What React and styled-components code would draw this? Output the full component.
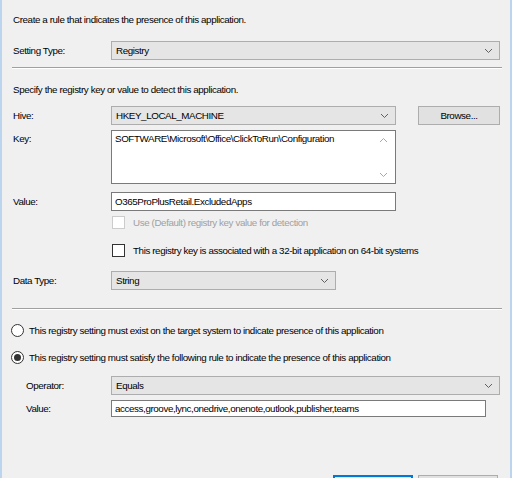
import React from "react";
import styled, { createGlobalStyle } from "styled-components";

const Global = createGlobalStyle`
  html, body { margin: 0; padding: 0; background: #f0f0f0; }
  * { box-sizing: border-box; }
`;

const Page = styled.div`
  width: 512px;
  height: 478px;
  overflow: hidden;
  background: #f0f0f0;
  border-left: 2px solid #bcd5ee;
  border-right: 2px solid #bcd5ee;
  padding: 13px 10px 0 11px;
  display: flex;
  flex-direction: column;
  font-family: "Liberation Sans", Arial, sans-serif;
  font-size: 9.8px;
  letter-spacing: -0.4px;
  color: #000;
`;

const Text = styled.div`
  height: 14px;
  line-height: 14px;
  margin-top: ${(p) => p.$mt || 0}px;
  white-space: nowrap;
`;

const Separator = styled.div`
  height: 1px;
  background: #a0a0a0;
  margin-top: ${(p) => p.$mt || 0}px;
  width: 490px;
  margin-left: -1px;
  box-shadow: 0 1px 0 #fff;
`;

const Row = styled.div`
  display: flex;
  align-items: ${(p) => (p.$top ? "flex-start" : "center")};
  margin-top: ${(p) => p.$mt || 0}px;
`;

const Label = styled.div`
  width: 98px;
  flex: none;
  padding-left: ${(p) => p.$indent || 0}px;
  padding-top: ${(p) => (p.$top ? 3 : 0)}px;
  white-space: nowrap;
`;

const Combo = styled.div`
  width: ${(p) => p.$w}px;
  height: 19px;
  border: 1px solid #adadad;
  background: #e5e5e5;
  display: flex;
  align-items: center;
  padding-left: 4px;
  white-space: nowrap;
`;

const ComboText = styled.span`
  flex: 1;
`;

const Chevron = styled.svg`
  width: 9px;
  height: 6px;
  margin-right: 6px;
  flex: none;
`;

const ChevronIcon = ({ up, light }) => (
  <Chevron viewBox="0 0 9 6">
    <path
      d={up ? "M1 5 L4.5 1.5 L8 5" : "M1 1 L4.5 4.5 L8 1"}
      fill="none"
      stroke={light ? "#a8a8a8" : "#606060"}
      strokeWidth="1"
    />
  </Chevron>
);

const Input = styled.div`
  width: ${(p) => p.$w}px;
  height: ${(p) => p.$h || 19}px;
  border: 1px solid #7a7a7a;
  background: #fff;
  display: flex;
  align-items: center;
  padding-left: 3px;
  white-space: nowrap;
  overflow: hidden;
`;

const TextArea = styled.div`
  width: 285px;
  height: 54px;
  border: 1px solid #7a7a7a;
  background: #fff;
  display: flex;
`;

const TextAreaContent = styled.div`
  flex: 1;
  padding: 2px 3px;
  white-space: nowrap;
`;

const ScrollBar = styled.div`
  width: 17px;
  display: flex;
  flex-direction: column;
  justify-content: space-between;
  align-items: center;
  padding: 6px 0 5px;
`;

const Button = styled.div`
  width: 82px;
  height: 19px;
  border: 1px solid #adadad;
  background: #e1e1e1;
  display: flex;
  align-items: center;
  justify-content: center;
  margin-left: ${(p) => p.$ml || 0}px;
`;

const CheckRow = styled.div`
  display: flex;
  align-items: center;
  margin-top: ${(p) => p.$mt || 0}px;
  margin-left: ${(p) => p.$indent || 0}px;
  color: ${(p) => (p.$disabled ? "#a0a0a0" : "#000")};
  height: 13px;
  white-space: nowrap;
`;

const Box = styled.span`
  width: 13px;
  height: 13px;
  border: 1px solid ${(p) => (p.$disabled ? "#cccccc" : "#333333")};
  background: #fff;
  margin-right: 8px;
  flex: none;
`;

const Radio = styled.span`
  width: 13px;
  height: 13px;
  border-radius: 50%;
  border: 1px solid #333;
  background: #fff;
  margin-right: 5px;
  flex: none;
  display: flex;
  align-items: center;
  justify-content: center;
  &::after {
    content: "";
    width: 7px;
    height: 7px;
    border-radius: 50%;
    background: ${(p) => (p.$checked ? "#333" : "transparent")};
  }
`;

const Footer = styled.div`
  margin-top: auto;
  display: flex;
  justify-content: flex-end;
  padding-right: 2px;
  height: 3px;
  align-items: flex-start;
`;

const FooterButton = styled.div`
  width: 80px;
  height: 23px;
  flex: none;
  border: 1px solid ${(p) => (p.$primary ? "#0078d7" : "#adadad")};
  box-shadow: ${(p) => (p.$primary ? "inset 0 0 0 1px #0078d7" : "none")};
  background: #e1e1e1;
  margin-left: ${(p) => p.$ml || 0}px;
`;

export default function App() {
  return (
    <>
      <Global />
      <Page>
        <Text>Create a rule that indicates the presence of this application.</Text>
        <Row $mt={14}>
          <Label>Setting Type:</Label>
          <Combo $w={389}>
            <ComboText>Registry</ComboText>
            <ChevronIcon />
          </Combo>
        </Row>
        <Separator $mt={7} />
        <Text $mt={15}>Specify the registry key or value to detect this application.</Text>
        <Row $mt={9}>
          <Label>Hive:</Label>
          <Combo $w={285}>
            <ComboText>HKEY_LOCAL_MACHINE</ComboText>
            <ChevronIcon />
          </Combo>
          <Button $ml={22}>Browse...</Button>
        </Row>
        <Row $mt={5} $top>
          <Label $top>Key:</Label>
          <TextArea>
            <TextAreaContent>SOFTWARE\Microsoft\Office\ClickToRun\Configuration</TextAreaContent>
            <ScrollBar>
              <ChevronIcon up light />
              <ChevronIcon light />
            </ScrollBar>
          </TextArea>
        </Row>
        <Row $mt={8}>
          <Label>Value:</Label>
          <Input $w={285}>O365ProPlusRetail.ExcludedApps</Input>
        </Row>
        <CheckRow $mt={5} $indent={99} $disabled>
          <Box $disabled />
          Use (Default) registry key value for detection
        </CheckRow>
        <CheckRow $mt={15} $indent={99}>
          <Box />
          This registry key is associated with a 32-bit application on 64-bit systems
        </CheckRow>
        <Row $mt={14}>
          <Label>Data Type:</Label>
          <Combo $w={225}>
            <ComboText>String</ComboText>
            <ChevronIcon />
          </Combo>
        </Row>
        <Separator $mt={18} />
        <CheckRow $mt={15} $indent={-2}>
          <Radio />
          This registry setting must exist on the target system to indicate presence of this application
        </CheckRow>
        <CheckRow $mt={14} $indent={-2}>
          <Radio $checked />
          This registry setting must satisfy the following rule to indicate the presence of this application
        </CheckRow>
        <Row $mt={12}>
          <Label $indent={13}>Operator:</Label>
          <Combo $w={389}>
            <ComboText>Equals</ComboText>
            <ChevronIcon />
          </Combo>
        </Row>
        <Row $mt={5}>
          <Label $indent={13}>Value:</Label>
          <Input $w={375} $h={17}>access,groove,lync,onedrive,onenote,outlook,publisher,teams</Input>
        </Row>
        <Footer>
          <FooterButton $primary />
          <FooterButton $ml={5} />
        </Footer>
      </Page>
    </>
  );
}
